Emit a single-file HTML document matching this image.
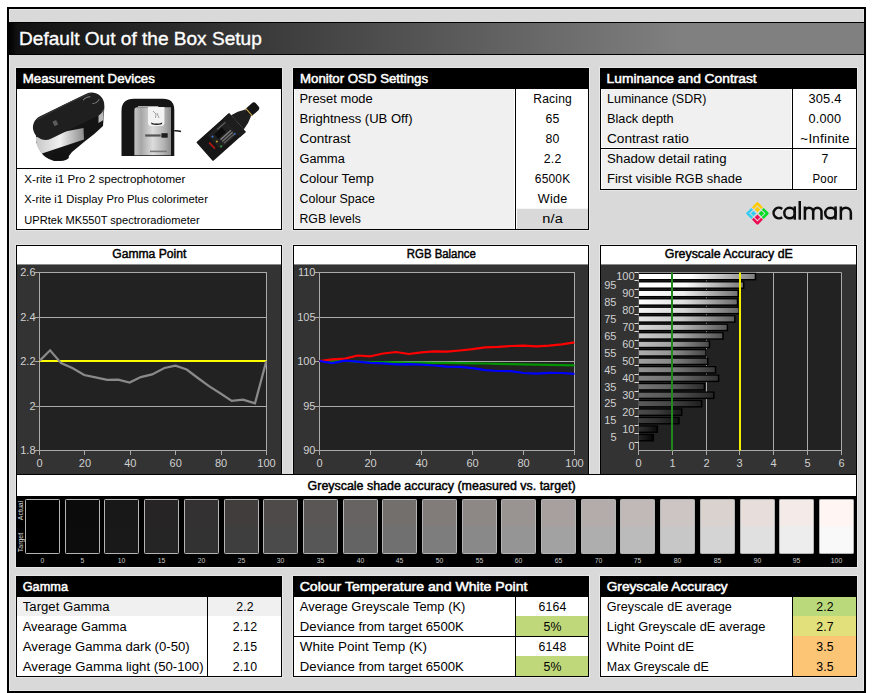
<!DOCTYPE html>
<html><head><meta charset="utf-8"><title>Default Out of the Box Setup</title>
<style>html,body{margin:0;padding:0;background:#fff;width:873px;height:693px;overflow:hidden}
text{font-family:"Liberation Sans", sans-serif}</style></head>
<body><svg width="873" height="693" viewBox="0 0 873 693" style="display:block;font-family:'Liberation Sans', sans-serif"><rect x="0" y="0" width="873" height="693" fill="#fff" />
<rect x="7" y="7" width="859" height="686" fill="#000" />
<rect x="9" y="9" width="855" height="682" fill="#e6e6e6" />
<rect x="10" y="10" width="853" height="680" fill="#d9d9d9" />
<defs><linearGradient id="tg" gradientUnits="userSpaceOnUse" x1="9" x2="680" y1="0" y2="0"><stop offset="0" stop-color="#000"/><stop offset="0.012" stop-color="#111"/><stop offset="1" stop-color="#808080"/></linearGradient></defs>
<rect x="9" y="22" width="855" height="33" fill="#000" />
<rect x="9" y="23" width="855" height="31" fill="url(#tg)" />
<text x="19.0" y="44.7" font-size="19" fill="#fff" text-anchor="start" font-weight="normal" textLength="242.8" lengthAdjust="spacingAndGlyphs" stroke="#fff" stroke-width="0.35">Default Out of the Box Setup</text>
<rect x="15" y="67" width="268" height="164" fill="#e6e6e6" />
<rect x="16" y="68" width="266" height="162" fill="#000" />
<rect x="17" y="69" width="264" height="160" fill="#fff" />
<rect x="16" y="68" width="266" height="21" fill="#000" />
<text x="22.7" y="82.8" font-size="13" fill="#fff" text-anchor="start" font-weight="normal" textLength="132.2" lengthAdjust="spacingAndGlyphs" stroke="#fff" stroke-width="0.5">Measurement Devices</text>
<rect x="16" y="168" width="266" height="1" fill="#000" />
<text x="24.3" y="182.8" font-size="11.3" fill="#000" text-anchor="start" font-weight="normal" textLength="161.1" lengthAdjust="spacingAndGlyphs" >X-rite i1 Pro 2 spectrophotomer</text>
<text x="24.3" y="203.20000000000002" font-size="11.3" fill="#000" text-anchor="start" font-weight="normal" textLength="183.6" lengthAdjust="spacingAndGlyphs" >X-rite i1 Display Pro Plus colorimeter</text>
<text x="24.3" y="223.60000000000002" font-size="11.3" fill="#000" text-anchor="start" font-weight="normal" textLength="175.3" lengthAdjust="spacingAndGlyphs" >UPRtek MK550T spectroradiometer</text>
<rect x="292" y="67" width="298" height="164" fill="#e6e6e6" />
<rect x="293" y="68" width="296" height="162" fill="#000" />
<rect x="294" y="69" width="294" height="160" fill="#fff" />
<rect x="293" y="68" width="296" height="21" fill="#000" />
<text x="300.0" y="82.8" font-size="13" fill="#fff" text-anchor="start" font-weight="normal" textLength="128.0" lengthAdjust="spacingAndGlyphs" stroke="#fff" stroke-width="0.5">Monitor OSD Settings</text>
<rect x="295" y="89" width="219" height="140" fill="#f0f0f0" />
<rect x="515" y="89" width="1" height="140" fill="#000" />
<rect x="516" y="208.5" width="72" height="1.2" fill="#ececec" />
<rect x="517" y="209" width="71" height="20" fill="#d9d9d9" />
<text x="299.5" y="102.8" font-size="12.3" fill="#000" text-anchor="start" font-weight="normal" textLength="73.2" lengthAdjust="spacingAndGlyphs" >Preset mode</text>
<text x="552.6" y="102.8" font-size="12.3" fill="#000" text-anchor="middle" font-weight="normal" textLength="38.7" lengthAdjust="spacingAndGlyphs" letter-spacing="0.2">Racing</text>
<text x="299.5" y="122.88" font-size="12.3" fill="#000" text-anchor="start" font-weight="normal" textLength="113.0" lengthAdjust="spacingAndGlyphs" >Brightness (UB Off)</text>
<text x="552.6" y="122.88" font-size="12.3" fill="#000" text-anchor="middle" font-weight="normal" letter-spacing="0.2">65</text>
<text x="299.5" y="142.95999999999998" font-size="12.3" fill="#000" text-anchor="start" font-weight="normal" textLength="51.1" lengthAdjust="spacingAndGlyphs" >Contrast</text>
<text x="552.6" y="142.95999999999998" font-size="12.3" fill="#000" text-anchor="middle" font-weight="normal" letter-spacing="0.2">80</text>
<text x="299.5" y="163.04" font-size="12.3" fill="#000" text-anchor="start" font-weight="normal" textLength="45.3" lengthAdjust="spacingAndGlyphs" >Gamma</text>
<text x="552.6" y="163.04" font-size="12.3" fill="#000" text-anchor="middle" font-weight="normal" letter-spacing="0.2">2.2</text>
<text x="299.5" y="183.12" font-size="12.3" fill="#000" text-anchor="start" font-weight="normal" textLength="74.2" lengthAdjust="spacingAndGlyphs" >Colour Temp</text>
<text x="552.6" y="183.12" font-size="12.3" fill="#000" text-anchor="middle" font-weight="normal" textLength="35.6" lengthAdjust="spacingAndGlyphs" letter-spacing="0.2">6500K</text>
<text x="299.5" y="203.2" font-size="12.3" fill="#000" text-anchor="start" font-weight="normal" textLength="75.3" lengthAdjust="spacingAndGlyphs" >Colour Space</text>
<text x="552.6" y="203.2" font-size="12.3" fill="#000" text-anchor="middle" font-weight="normal" textLength="29.5" lengthAdjust="spacingAndGlyphs" letter-spacing="0.2">Wide</text>
<text x="299.5" y="223.27999999999997" font-size="12.3" fill="#000" text-anchor="start" font-weight="normal" textLength="61.3" lengthAdjust="spacingAndGlyphs" >RGB levels</text>
<text x="552.6" y="223.27999999999997" font-size="12.3" fill="#000" text-anchor="middle" font-weight="normal" textLength="20.9" lengthAdjust="spacingAndGlyphs" letter-spacing="0.2">n/a</text>
<rect x="599" y="67" width="259" height="124" fill="#e6e6e6" />
<rect x="600" y="68" width="257" height="122" fill="#000" />
<rect x="601" y="69" width="255" height="120" fill="#fff" />
<rect x="600" y="68" width="257" height="21" fill="#000" />
<text x="606.6" y="82.8" font-size="13" fill="#fff" text-anchor="start" font-weight="normal" textLength="150.1" lengthAdjust="spacingAndGlyphs" stroke="#fff" stroke-width="0.5">Luminance and Contrast</text>
<rect x="602" y="89" width="189" height="58" fill="#f0f0f0" />
<rect x="602" y="150" width="189" height="39" fill="#f0f0f0" />
<rect x="792" y="89" width="1" height="100" fill="#000" />
<rect x="600" y="148" width="257" height="1" fill="#000" />
<text x="607.0" y="102.75" font-size="12.3" fill="#000" text-anchor="start" font-weight="normal" textLength="99.4" lengthAdjust="spacingAndGlyphs" >Luminance (SDR)</text>
<text x="825.0" y="102.75" font-size="12.3" fill="#000" text-anchor="middle" font-weight="normal" textLength="33.2" lengthAdjust="spacingAndGlyphs" letter-spacing="0.2">305.4</text>
<text x="607.0" y="122.5" font-size="12.3" fill="#000" text-anchor="start" font-weight="normal" textLength="66.6" lengthAdjust="spacingAndGlyphs" >Black depth</text>
<text x="825.0" y="122.5" font-size="12.3" fill="#000" text-anchor="middle" font-weight="normal" textLength="32.8" lengthAdjust="spacingAndGlyphs" letter-spacing="0.2">0.000</text>
<text x="607.0" y="143.0" font-size="12.3" fill="#000" text-anchor="start" font-weight="normal" textLength="81.8" lengthAdjust="spacingAndGlyphs" >Contrast ratio</text>
<text x="825.0" y="143.0" font-size="12.3" fill="#000" text-anchor="middle" font-weight="normal" textLength="49.3" lengthAdjust="spacingAndGlyphs" letter-spacing="0.2">~Infinite</text>
<text x="607.0" y="162.5" font-size="12.3" fill="#000" text-anchor="start" font-weight="normal" textLength="119.5" lengthAdjust="spacingAndGlyphs" >Shadow detail rating</text>
<text x="825.0" y="162.5" font-size="12.3" fill="#000" text-anchor="middle" font-weight="normal" letter-spacing="0.2">7</text>
<text x="607.0" y="183.0" font-size="12.3" fill="#000" text-anchor="start" font-weight="normal" textLength="135.1" lengthAdjust="spacingAndGlyphs" >First visible RGB shade</text>
<text x="825.0" y="183.0" font-size="12.3" fill="#000" text-anchor="middle" font-weight="normal" textLength="25.0" lengthAdjust="spacingAndGlyphs" letter-spacing="0.2">Poor</text>
<rect x="15" y="244" width="268" height="231" fill="#e6e6e6" />
<rect x="16" y="245" width="266" height="230" fill="#000" />
<rect x="17" y="246" width="264" height="18" fill="#fff" />
<rect x="17" y="264" width="264" height="1" fill="#8a8a8a" />
<rect x="17" y="265" width="264" height="209" fill="#333" />
<text x="149.3" y="258.0" font-size="12" fill="#000" text-anchor="middle" font-weight="normal" textLength="74.0" lengthAdjust="spacingAndGlyphs" stroke="#000" stroke-width="0.45">Gamma Point</text>
<rect x="292" y="244" width="298" height="231" fill="#e6e6e6" />
<rect x="293" y="245" width="296" height="230" fill="#000" />
<rect x="294" y="246" width="294" height="18" fill="#fff" />
<rect x="294" y="264" width="294" height="1" fill="#8a8a8a" />
<rect x="294" y="265" width="294" height="209" fill="#333" />
<text x="441.3" y="258.0" font-size="12" fill="#000" text-anchor="middle" font-weight="normal" textLength="69.0" lengthAdjust="spacingAndGlyphs" stroke="#000" stroke-width="0.45">RGB Balance</text>
<rect x="599" y="244" width="259" height="231" fill="#e6e6e6" />
<rect x="600" y="245" width="257" height="230" fill="#000" />
<rect x="601" y="246" width="255" height="18" fill="#fff" />
<rect x="601" y="264" width="255" height="1" fill="#8a8a8a" />
<rect x="601" y="265" width="255" height="209" fill="#333" />
<text x="728.8" y="258.0" font-size="12" fill="#000" text-anchor="middle" font-weight="normal" textLength="128.0" lengthAdjust="spacingAndGlyphs" stroke="#000" stroke-width="0.45">Greyscale Accuracy dE</text>
<rect x="39.5" y="272.5" width="227.0" height="178.0" fill="#222" />
<line x1="34.5" y1="272.5" x2="266.5" y2="272.5" stroke="#aaa" stroke-width="1"/>
<text x="35.5" y="276.2" font-size="11" fill="#d0d0d0" text-anchor="end" font-weight="normal" >2.6</text>
<line x1="34.5" y1="317.5" x2="266.5" y2="317.5" stroke="#aaa" stroke-width="1"/>
<text x="35.5" y="321.2" font-size="11" fill="#d0d0d0" text-anchor="end" font-weight="normal" >2.4</text>
<line x1="34.5" y1="361.5" x2="266.5" y2="361.5" stroke="#aaa" stroke-width="1"/>
<text x="35.5" y="365.2" font-size="11" fill="#d0d0d0" text-anchor="end" font-weight="normal" >2.2</text>
<line x1="34.5" y1="406.5" x2="266.5" y2="406.5" stroke="#aaa" stroke-width="1"/>
<text x="35.5" y="410.2" font-size="11" fill="#d0d0d0" text-anchor="end" font-weight="normal" >2</text>
<line x1="34.5" y1="450.5" x2="266.5" y2="450.5" stroke="#aaa" stroke-width="1"/>
<text x="35.5" y="454.2" font-size="11" fill="#d0d0d0" text-anchor="end" font-weight="normal" >1.8</text>
<line x1="39.5" y1="272" x2="39.5" y2="455" stroke="#aaa" stroke-width="1"/>
<line x1="266.5" y1="272" x2="266.5" y2="451" stroke="#aaa" stroke-width="1"/>
<line x1="39.5" y1="450" x2="39.5" y2="455" stroke="#aaa" stroke-width="1"/>
<text x="39.5" y="467" font-size="11" fill="#d0d0d0" text-anchor="middle" font-weight="normal" >0</text>
<line x1="84.5" y1="450" x2="84.5" y2="455" stroke="#aaa" stroke-width="1"/>
<text x="84.9" y="467" font-size="11" fill="#d0d0d0" text-anchor="middle" font-weight="normal" >20</text>
<line x1="130.5" y1="450" x2="130.5" y2="455" stroke="#aaa" stroke-width="1"/>
<text x="130.3" y="467" font-size="11" fill="#d0d0d0" text-anchor="middle" font-weight="normal" >40</text>
<line x1="175.5" y1="450" x2="175.5" y2="455" stroke="#aaa" stroke-width="1"/>
<text x="175.7" y="467" font-size="11" fill="#d0d0d0" text-anchor="middle" font-weight="normal" >60</text>
<line x1="221.5" y1="450" x2="221.5" y2="455" stroke="#aaa" stroke-width="1"/>
<text x="221.1" y="467" font-size="11" fill="#d0d0d0" text-anchor="middle" font-weight="normal" >80</text>
<line x1="266.5" y1="450" x2="266.5" y2="455" stroke="#aaa" stroke-width="1"/>
<text x="266.5" y="467" font-size="11" fill="#d0d0d0" text-anchor="middle" font-weight="normal" >100</text>
<line x1="39.5" y1="361" x2="266.5" y2="361" stroke="#ffff00" stroke-width="2.2"/>
<polyline fill="none" stroke="#8a8a8a" stroke-width="2.2" points="39.8,360.6 50.1,350.3 61.1,363.1 72.8,368.2 84.2,375 95.5,377.4 107.2,379.9 118.2,379.6 129.6,382.6 140.8,377.1 152.1,374.4 164.4,368 175.5,365.6 186.7,369.5 197.9,378 209,386.2 220.2,393.3 231.7,400.8 243,399.6 255,403.3 266.3,361.1"/>
<rect x="319.5" y="272.5" width="255.0" height="178.0" fill="#222" />
<line x1="314.5" y1="272.5" x2="574.5" y2="272.5" stroke="#aaa" stroke-width="1"/>
<text x="315.5" y="276.2" font-size="11" fill="#d0d0d0" text-anchor="end" font-weight="normal" >110</text>
<line x1="314.5" y1="317.5" x2="574.5" y2="317.5" stroke="#aaa" stroke-width="1"/>
<text x="315.5" y="321.2" font-size="11" fill="#d0d0d0" text-anchor="end" font-weight="normal" >105</text>
<line x1="314.5" y1="361.5" x2="574.5" y2="361.5" stroke="#aaa" stroke-width="1"/>
<text x="315.5" y="365.2" font-size="11" fill="#d0d0d0" text-anchor="end" font-weight="normal" >100</text>
<line x1="314.5" y1="406.5" x2="574.5" y2="406.5" stroke="#aaa" stroke-width="1"/>
<text x="315.5" y="410.2" font-size="11" fill="#d0d0d0" text-anchor="end" font-weight="normal" >95</text>
<line x1="314.5" y1="450.5" x2="574.5" y2="450.5" stroke="#aaa" stroke-width="1"/>
<text x="315.5" y="454.2" font-size="11" fill="#d0d0d0" text-anchor="end" font-weight="normal" >90</text>
<line x1="319.5" y1="272" x2="319.5" y2="455" stroke="#aaa" stroke-width="1"/>
<line x1="574.5" y1="272" x2="574.5" y2="451" stroke="#aaa" stroke-width="1"/>
<line x1="319.5" y1="450" x2="319.5" y2="455" stroke="#aaa" stroke-width="1"/>
<text x="319.5" y="467" font-size="11" fill="#d0d0d0" text-anchor="middle" font-weight="normal" >0</text>
<line x1="370.5" y1="450" x2="370.5" y2="455" stroke="#aaa" stroke-width="1"/>
<text x="370.5" y="467" font-size="11" fill="#d0d0d0" text-anchor="middle" font-weight="normal" >20</text>
<line x1="421.5" y1="450" x2="421.5" y2="455" stroke="#aaa" stroke-width="1"/>
<text x="421.5" y="467" font-size="11" fill="#d0d0d0" text-anchor="middle" font-weight="normal" >40</text>
<line x1="472.5" y1="450" x2="472.5" y2="455" stroke="#aaa" stroke-width="1"/>
<text x="472.5" y="467" font-size="11" fill="#d0d0d0" text-anchor="middle" font-weight="normal" >60</text>
<line x1="523.5" y1="450" x2="523.5" y2="455" stroke="#aaa" stroke-width="1"/>
<text x="523.5" y="467" font-size="11" fill="#d0d0d0" text-anchor="middle" font-weight="normal" >80</text>
<line x1="574.5" y1="450" x2="574.5" y2="455" stroke="#aaa" stroke-width="1"/>
<text x="574.5" y="467" font-size="11" fill="#d0d0d0" text-anchor="middle" font-weight="normal" >100</text>
<polyline fill="none" stroke="#009400" stroke-width="2.2" stroke-linejoin="round" points="319.5,361 332.25,361 345.0,361 357.75,361.7 370.5,362.0 383.25,362.2 396.0,362.4 408.75,362.5 421.5,362.59999999999997 434.25,362.79999999999995 447.0,362.9 459.75,363.09999999999997 472.5,363.29999999999995 485.25,363.5 498.0,363.79999999999995 510.75,364.09999999999997 523.5,364.29999999999995 536.25,364.59999999999997 549.0,364.9 561.75,365.2 574.5,365.4"/>
<polyline fill="none" stroke="#ff0000" stroke-width="2.2" stroke-linejoin="round" points="319.5,361 332.25,359.4 345.0,358.6 357.75,355.5 370.5,356.3 383.25,353.5 396.0,352 408.75,354 421.5,352.4 434.25,351.3 447.0,351.6 459.75,350.5 472.5,349.2 485.25,347.3 498.0,346.8 510.75,346 523.5,345.7 536.25,346.4 549.0,345.6 561.75,344.4 574.5,342.3"/>
<polyline fill="none" stroke="#0000ff" stroke-width="2.2" stroke-linejoin="round" points="319.5,361 332.25,363.2 345.0,360.6 357.75,361.7 370.5,362.8 383.25,363.4 396.0,364.3 408.75,364.1 421.5,364.6 434.25,365.5 447.0,366.6 459.75,366.9 472.5,368.2 485.25,370.1 498.0,371 510.75,371.2 523.5,373 536.25,373.6 549.0,372.8 561.75,373 574.5,373.8"/>
<rect x="638.5" y="272.5" width="202.98000000000002" height="178.0" fill="#222" />
<line x1="638.5" y1="450" x2="638.5" y2="455" stroke="#aaa" stroke-width="1"/>
<text x="638.5" y="467" font-size="11" fill="#d0d0d0" text-anchor="middle" font-weight="normal" >0</text>
<line x1="672.5" y1="450" x2="672.5" y2="455" stroke="#aaa" stroke-width="1"/>
<text x="672.5" y="467" font-size="11" fill="#d0d0d0" text-anchor="middle" font-weight="normal" >1</text>
<line x1="706.5" y1="272.5" x2="706.5" y2="451" stroke="#aaa" stroke-width="1"/>
<line x1="706.5" y1="450" x2="706.5" y2="455" stroke="#aaa" stroke-width="1"/>
<text x="706.5" y="467" font-size="11" fill="#d0d0d0" text-anchor="middle" font-weight="normal" >2</text>
<line x1="739.5" y1="450" x2="739.5" y2="455" stroke="#aaa" stroke-width="1"/>
<text x="739.5" y="467" font-size="11" fill="#d0d0d0" text-anchor="middle" font-weight="normal" >3</text>
<line x1="773.5" y1="272.5" x2="773.5" y2="451" stroke="#aaa" stroke-width="1"/>
<line x1="773.5" y1="450" x2="773.5" y2="455" stroke="#aaa" stroke-width="1"/>
<text x="773.5" y="467" font-size="11" fill="#d0d0d0" text-anchor="middle" font-weight="normal" >4</text>
<line x1="807.5" y1="272.5" x2="807.5" y2="451" stroke="#aaa" stroke-width="1"/>
<line x1="807.5" y1="450" x2="807.5" y2="455" stroke="#aaa" stroke-width="1"/>
<text x="807.5" y="467" font-size="11" fill="#d0d0d0" text-anchor="middle" font-weight="normal" >5</text>
<line x1="841.5" y1="272.5" x2="841.5" y2="451" stroke="#aaa" stroke-width="1"/>
<line x1="841.5" y1="450" x2="841.5" y2="455" stroke="#aaa" stroke-width="1"/>
<text x="841.5" y="467" font-size="11" fill="#d0d0d0" text-anchor="middle" font-weight="normal" >6</text>
<line x1="638.5" y1="450.5" x2="841.48" y2="450.5" stroke="#aaa" stroke-width="1"/>
<line x1="638.5" y1="272.5" x2="841.48" y2="272.5" stroke="#aaa" stroke-width="1"/>
<line x1="638.5" y1="272" x2="638.5" y2="455" stroke="#aaa" stroke-width="1"/>
<defs>
<linearGradient id="b0" x1="0" x2="1"><stop offset="0" stop-color="rgb(0,0,0)"/><stop offset="0.45" stop-color="rgb(0,0,0)"/><stop offset="1" stop-color="rgb(0,0,0)"/></linearGradient>
<linearGradient id="b5" x1="0" x2="1"><stop offset="0" stop-color="rgb(34,34,34)"/><stop offset="0.45" stop-color="rgb(22,22,22)"/><stop offset="1" stop-color="rgb(6,6,6)"/></linearGradient>
<linearGradient id="b10" x1="0" x2="1"><stop offset="0" stop-color="rgb(48,48,48)"/><stop offset="0.45" stop-color="rgb(35,35,35)"/><stop offset="1" stop-color="rgb(12,12,12)"/></linearGradient>
<linearGradient id="b15" x1="0" x2="1"><stop offset="0" stop-color="rgb(62,62,62)"/><stop offset="0.45" stop-color="rgb(48,48,48)"/><stop offset="1" stop-color="rgb(19,19,19)"/></linearGradient>
<linearGradient id="b20" x1="0" x2="1"><stop offset="0" stop-color="rgb(76,76,76)"/><stop offset="0.45" stop-color="rgb(61,61,61)"/><stop offset="1" stop-color="rgb(25,25,25)"/></linearGradient>
<linearGradient id="b25" x1="0" x2="1"><stop offset="0" stop-color="rgb(90,90,90)"/><stop offset="0.45" stop-color="rgb(73,73,73)"/><stop offset="1" stop-color="rgb(31,31,31)"/></linearGradient>
<linearGradient id="b30" x1="0" x2="1"><stop offset="0" stop-color="rgb(104,104,104)"/><stop offset="0.45" stop-color="rgb(86,86,86)"/><stop offset="1" stop-color="rgb(38,38,38)"/></linearGradient>
<linearGradient id="b35" x1="0" x2="1"><stop offset="0" stop-color="rgb(118,118,118)"/><stop offset="0.45" stop-color="rgb(99,99,99)"/><stop offset="1" stop-color="rgb(44,44,44)"/></linearGradient>
<linearGradient id="b40" x1="0" x2="1"><stop offset="0" stop-color="rgb(132,132,132)"/><stop offset="0.45" stop-color="rgb(112,112,112)"/><stop offset="1" stop-color="rgb(51,51,51)"/></linearGradient>
<linearGradient id="b45" x1="0" x2="1"><stop offset="0" stop-color="rgb(146,146,146)"/><stop offset="0.45" stop-color="rgb(124,124,124)"/><stop offset="1" stop-color="rgb(57,57,57)"/></linearGradient>
<linearGradient id="b50" x1="0" x2="1"><stop offset="0" stop-color="rgb(160,160,160)"/><stop offset="0.45" stop-color="rgb(137,137,137)"/><stop offset="1" stop-color="rgb(63,63,63)"/></linearGradient>
<linearGradient id="b55" x1="0" x2="1"><stop offset="0" stop-color="rgb(174,174,174)"/><stop offset="0.45" stop-color="rgb(150,150,150)"/><stop offset="1" stop-color="rgb(70,70,70)"/></linearGradient>
<linearGradient id="b60" x1="0" x2="1"><stop offset="0" stop-color="rgb(188,188,188)"/><stop offset="0.45" stop-color="rgb(163,163,163)"/><stop offset="1" stop-color="rgb(76,76,76)"/></linearGradient>
<linearGradient id="b65" x1="0" x2="1"><stop offset="0" stop-color="rgb(202,202,202)"/><stop offset="0.45" stop-color="rgb(175,175,175)"/><stop offset="1" stop-color="rgb(82,82,82)"/></linearGradient>
<linearGradient id="b70" x1="0" x2="1"><stop offset="0" stop-color="rgb(216,216,216)"/><stop offset="0.45" stop-color="rgb(188,188,188)"/><stop offset="1" stop-color="rgb(89,89,89)"/></linearGradient>
<linearGradient id="b75" x1="0" x2="1"><stop offset="0" stop-color="rgb(230,230,230)"/><stop offset="0.45" stop-color="rgb(201,201,201)"/><stop offset="1" stop-color="rgb(95,95,95)"/></linearGradient>
<linearGradient id="b80" x1="0" x2="1"><stop offset="0" stop-color="rgb(244,244,244)"/><stop offset="0.45" stop-color="rgb(214,214,214)"/><stop offset="1" stop-color="rgb(102,102,102)"/></linearGradient>
<linearGradient id="b85" x1="0" x2="1"><stop offset="0" stop-color="rgb(255,255,255)"/><stop offset="0.45" stop-color="rgb(226,226,226)"/><stop offset="1" stop-color="rgb(108,108,108)"/></linearGradient>
<linearGradient id="b90" x1="0" x2="1"><stop offset="0" stop-color="rgb(255,255,255)"/><stop offset="0.45" stop-color="rgb(239,239,239)"/><stop offset="1" stop-color="rgb(114,114,114)"/></linearGradient>
<linearGradient id="b95" x1="0" x2="1"><stop offset="0" stop-color="rgb(255,255,255)"/><stop offset="0.45" stop-color="rgb(252,252,252)"/><stop offset="1" stop-color="rgb(121,121,121)"/></linearGradient>
<linearGradient id="b100" x1="0" x2="1"><stop offset="0" stop-color="rgb(255,255,255)"/><stop offset="0.45" stop-color="rgb(255,255,255)"/><stop offset="1" stop-color="rgb(127,127,127)"/></linearGradient>
</defs>
<rect x="638.5" y="272.8" width="117.71" height="7.6" fill="#000" />
<rect x="639.0" y="274.0" width="115.71" height="5.0" fill="url(#b100)" />
<line x1="634.5" y1="272.5" x2="638.5" y2="272.5" stroke="#ddd" stroke-width="1"/>
<text x="634.5" y="280.33809523809526" font-size="11" fill="#d0d0d0" text-anchor="end" font-weight="normal" >100</text>
<rect x="638.5" y="281.28" width="105.87" height="7.6" fill="#000" />
<rect x="639.0" y="282.48" width="103.87" height="5.0" fill="url(#b95)" />
<line x1="634.5" y1="280.5" x2="638.5" y2="280.5" stroke="#ddd" stroke-width="1"/>
<text x="616.5" y="288.81428571428575" font-size="11" fill="#d0d0d0" text-anchor="end" font-weight="normal" >95</text>
<rect x="638.5" y="289.75" width="100.46" height="7.6" fill="#000" />
<rect x="639.0" y="290.95" width="98.46" height="5.0" fill="url(#b90)" />
<line x1="634.5" y1="289.5" x2="638.5" y2="289.5" stroke="#ddd" stroke-width="1"/>
<text x="634.5" y="297.2904761904762" font-size="11" fill="#d0d0d0" text-anchor="end" font-weight="normal" >90</text>
<rect x="638.5" y="298.23" width="99.78" height="7.6" fill="#000" />
<rect x="639.0" y="299.43" width="97.78" height="5.0" fill="url(#b85)" />
<line x1="634.5" y1="297.5" x2="638.5" y2="297.5" stroke="#ddd" stroke-width="1"/>
<text x="616.5" y="305.7666666666667" font-size="11" fill="#d0d0d0" text-anchor="end" font-weight="normal" >85</text>
<rect x="638.5" y="306.7" width="101.48" height="7.6" fill="#000" />
<rect x="639.0" y="307.9" width="99.48" height="5.0" fill="url(#b80)" />
<line x1="634.5" y1="306.5" x2="638.5" y2="306.5" stroke="#ddd" stroke-width="1"/>
<text x="634.5" y="314.2428571428572" font-size="11" fill="#d0d0d0" text-anchor="end" font-weight="normal" >80</text>
<rect x="638.5" y="315.18" width="97.08" height="7.6" fill="#000" />
<rect x="639.0" y="316.38" width="95.08" height="5.0" fill="url(#b75)" />
<line x1="634.5" y1="314.5" x2="638.5" y2="314.5" stroke="#ddd" stroke-width="1"/>
<text x="616.5" y="322.71904761904767" font-size="11" fill="#d0d0d0" text-anchor="end" font-weight="normal" >75</text>
<rect x="638.5" y="323.66" width="89.63" height="7.6" fill="#000" />
<rect x="639.0" y="324.86" width="87.63" height="5.0" fill="url(#b70)" />
<line x1="634.5" y1="323.5" x2="638.5" y2="323.5" stroke="#ddd" stroke-width="1"/>
<text x="634.5" y="331.19523809523815" font-size="11" fill="#d0d0d0" text-anchor="end" font-weight="normal" >70</text>
<rect x="638.5" y="332.13" width="85.24" height="7.6" fill="#000" />
<rect x="639.0" y="333.33" width="83.24" height="5.0" fill="url(#b65)" />
<line x1="634.5" y1="331.5" x2="638.5" y2="331.5" stroke="#ddd" stroke-width="1"/>
<text x="616.5" y="339.6714285714286" font-size="11" fill="#d0d0d0" text-anchor="end" font-weight="normal" >65</text>
<rect x="638.5" y="340.61" width="71.7" height="7.6" fill="#000" />
<rect x="639.0" y="341.81" width="69.7" height="5.0" fill="url(#b60)" />
<line x1="634.5" y1="340.5" x2="638.5" y2="340.5" stroke="#ddd" stroke-width="1"/>
<text x="634.5" y="348.14761904761906" font-size="11" fill="#d0d0d0" text-anchor="end" font-weight="normal" >60</text>
<rect x="638.5" y="349.09" width="68.32" height="7.6" fill="#000" />
<rect x="639.0" y="350.29" width="66.32" height="5.0" fill="url(#b55)" />
<line x1="634.5" y1="348.5" x2="638.5" y2="348.5" stroke="#ddd" stroke-width="1"/>
<text x="616.5" y="356.62380952380954" font-size="11" fill="#d0d0d0" text-anchor="end" font-weight="normal" >55</text>
<rect x="638.5" y="357.56" width="70.01" height="7.6" fill="#000" />
<rect x="639.0" y="358.76" width="68.01" height="5.0" fill="url(#b50)" />
<line x1="634.5" y1="357.5" x2="638.5" y2="357.5" stroke="#ddd" stroke-width="1"/>
<text x="634.5" y="365.1" font-size="11" fill="#d0d0d0" text-anchor="end" font-weight="normal" >50</text>
<rect x="638.5" y="366.04" width="77.79" height="7.6" fill="#000" />
<rect x="639.0" y="367.24" width="75.79" height="5.0" fill="url(#b45)" />
<line x1="634.5" y1="365.5" x2="638.5" y2="365.5" stroke="#ddd" stroke-width="1"/>
<text x="616.5" y="373.5761904761905" font-size="11" fill="#d0d0d0" text-anchor="end" font-weight="normal" >45</text>
<rect x="638.5" y="374.51" width="80.84" height="7.6" fill="#000" />
<rect x="639.0" y="375.71" width="78.84" height="5.0" fill="url(#b40)" />
<line x1="634.5" y1="374.5" x2="638.5" y2="374.5" stroke="#ddd" stroke-width="1"/>
<text x="634.5" y="382.052380952381" font-size="11" fill="#d0d0d0" text-anchor="end" font-weight="normal" >40</text>
<rect x="638.5" y="382.99" width="66.63" height="7.6" fill="#000" />
<rect x="639.0" y="384.19" width="64.63" height="5.0" fill="url(#b35)" />
<line x1="634.5" y1="382.5" x2="638.5" y2="382.5" stroke="#ddd" stroke-width="1"/>
<text x="616.5" y="390.52857142857147" font-size="11" fill="#d0d0d0" text-anchor="end" font-weight="normal" >35</text>
<rect x="638.5" y="391.47" width="76.1" height="7.6" fill="#000" />
<rect x="639.0" y="392.67" width="74.1" height="5.0" fill="url(#b30)" />
<line x1="634.5" y1="391.5" x2="638.5" y2="391.5" stroke="#ddd" stroke-width="1"/>
<text x="634.5" y="399.00476190476195" font-size="11" fill="#d0d0d0" text-anchor="end" font-weight="normal" >30</text>
<rect x="638.5" y="399.94" width="63.92" height="7.6" fill="#000" />
<rect x="639.0" y="401.14" width="61.92" height="5.0" fill="url(#b25)" />
<line x1="634.5" y1="399.5" x2="638.5" y2="399.5" stroke="#ddd" stroke-width="1"/>
<text x="616.5" y="407.4809523809524" font-size="11" fill="#d0d0d0" text-anchor="end" font-weight="normal" >25</text>
<rect x="638.5" y="408.42" width="43.96" height="7.6" fill="#000" />
<rect x="639.0" y="409.62" width="41.96" height="5.0" fill="url(#b20)" />
<line x1="634.5" y1="408.5" x2="638.5" y2="408.5" stroke="#ddd" stroke-width="1"/>
<text x="634.5" y="415.95714285714286" font-size="11" fill="#d0d0d0" text-anchor="end" font-weight="normal" >20</text>
<rect x="638.5" y="416.9" width="41.26" height="7.6" fill="#000" />
<rect x="639.0" y="418.1" width="39.26" height="5.0" fill="url(#b15)" />
<line x1="634.5" y1="416.5" x2="638.5" y2="416.5" stroke="#ddd" stroke-width="1"/>
<text x="616.5" y="424.43333333333334" font-size="11" fill="#d0d0d0" text-anchor="end" font-weight="normal" >15</text>
<rect x="638.5" y="425.37" width="19.61" height="7.6" fill="#000" />
<rect x="639.0" y="426.57" width="17.61" height="5.0" fill="url(#b10)" />
<line x1="634.5" y1="425.5" x2="638.5" y2="425.5" stroke="#ddd" stroke-width="1"/>
<text x="634.5" y="432.9095238095238" font-size="11" fill="#d0d0d0" text-anchor="end" font-weight="normal" >10</text>
<rect x="638.5" y="433.85" width="15.55" height="7.6" fill="#000" />
<rect x="639.0" y="435.05" width="13.55" height="5.0" fill="url(#b5)" />
<line x1="634.5" y1="433.5" x2="638.5" y2="433.5" stroke="#ddd" stroke-width="1"/>
<text x="616.5" y="441.3857142857143" font-size="11" fill="#d0d0d0" text-anchor="end" font-weight="normal" >5</text>
<line x1="634.5" y1="442.5" x2="638.5" y2="442.5" stroke="#ddd" stroke-width="1"/>
<text x="634.5" y="449.8619047619048" font-size="11" fill="#d0d0d0" text-anchor="end" font-weight="normal" >0</text>
<line x1="672" y1="272.5" x2="672" y2="450.5" stroke="#1e8a1e" stroke-width="2"/>
<line x1="740" y1="272.5" x2="740" y2="450.5" stroke="#f0f000" stroke-width="2"/>
<rect x="15" y="474" width="843" height="94" fill="#e6e6e6" />
<rect x="16" y="474" width="841" height="93" fill="#000" />
<rect x="17" y="475" width="839" height="21" fill="#fff" />
<text x="441.6" y="489.7" font-size="12" fill="#000" text-anchor="middle" font-weight="normal" textLength="268.0" lengthAdjust="spacingAndGlyphs" stroke="#000" stroke-width="0.45">Greyscale shade accuracy (measured vs. target)</text>
<text x="0" y="0" font-size="1" fill="#000" text-anchor="start" font-weight="normal" ></text>
<g transform="translate(23,510.5) rotate(-90)">
<text x="0" y="0" font-size="7.5" fill="#ddd" text-anchor="middle" font-weight="normal" textLength="19.3" lengthAdjust="spacingAndGlyphs" >Actual</text>
</g>
<g transform="translate(23,542.5) rotate(-90)">
<text x="0" y="0" font-size="7.5" fill="#ddd" text-anchor="middle" font-weight="normal" textLength="19.3" lengthAdjust="spacingAndGlyphs" >Target</text>
</g>
<rect x="25.50" y="499.5" width="34" height="54" rx="0.8" fill="rgb(0,0,0)" stroke="#b4b4b4" stroke-width="1"/>
<rect x="26.00" y="500" width="33" height="26.5" fill="rgb(0, 0, 0)"/>
<text x="42.5" y="563" font-size="6.8" fill="#c8c8c8" text-anchor="middle" font-weight="normal" >0</text>
<rect x="65.50" y="499.5" width="34" height="54" rx="0.8" fill="rgb(12,12,12)" stroke="#b4b4b4" stroke-width="1"/>
<rect x="66.00" y="500" width="33" height="26.5" fill="rgb(12, 11, 11)"/>
<text x="82.5" y="563" font-size="6.8" fill="#c8c8c8" text-anchor="middle" font-weight="normal" >5</text>
<rect x="104.50" y="499.5" width="34" height="54" rx="0.8" fill="rgb(25,25,25)" stroke="#b4b4b4" stroke-width="1"/>
<rect x="105.00" y="500" width="33" height="26.5" fill="rgb(25, 24, 24)"/>
<text x="121.5" y="563" font-size="6.8" fill="#c8c8c8" text-anchor="middle" font-weight="normal" >10</text>
<rect x="144.50" y="499.5" width="34" height="54" rx="0.8" fill="rgb(37,37,37)" stroke="#b4b4b4" stroke-width="1"/>
<rect x="145.00" y="500" width="33" height="26.5" fill="rgb(38, 36, 36)"/>
<text x="161.5" y="563" font-size="6.8" fill="#c8c8c8" text-anchor="middle" font-weight="normal" >15</text>
<rect x="184.50" y="499.5" width="34" height="54" rx="0.8" fill="rgb(50,50,50)" stroke="#b4b4b4" stroke-width="1"/>
<rect x="185.00" y="500" width="33" height="26.5" fill="rgb(51, 49, 49)"/>
<text x="201.5" y="563" font-size="6.8" fill="#c8c8c8" text-anchor="middle" font-weight="normal" >20</text>
<rect x="224.50" y="499.5" width="34" height="54" rx="0.8" fill="rgb(62,62,62)" stroke="#b4b4b4" stroke-width="1"/>
<rect x="225.00" y="500" width="33" height="26.5" fill="rgb(64, 61, 60)"/>
<text x="241.5" y="563" font-size="6.8" fill="#c8c8c8" text-anchor="middle" font-weight="normal" >25</text>
<rect x="263.50" y="499.5" width="34" height="54" rx="0.8" fill="rgb(75,75,75)" stroke="#b4b4b4" stroke-width="1"/>
<rect x="264.00" y="500" width="33" height="26.5" fill="rgb(77, 74, 73)"/>
<text x="280.5" y="563" font-size="6.8" fill="#c8c8c8" text-anchor="middle" font-weight="normal" >30</text>
<rect x="303.50" y="499.5" width="34" height="54" rx="0.8" fill="rgb(87,87,87)" stroke="#b4b4b4" stroke-width="1"/>
<rect x="304.00" y="500" width="33" height="26.5" fill="rgb(89, 86, 85)"/>
<text x="320.5" y="563" font-size="6.8" fill="#c8c8c8" text-anchor="middle" font-weight="normal" >35</text>
<rect x="343.50" y="499.5" width="34" height="54" rx="0.8" fill="rgb(100,100,100)" stroke="#b4b4b4" stroke-width="1"/>
<rect x="344.00" y="500" width="33" height="26.5" fill="rgb(103, 99, 98)"/>
<text x="360.5" y="563" font-size="6.8" fill="#c8c8c8" text-anchor="middle" font-weight="normal" >40</text>
<rect x="382.50" y="499.5" width="34" height="54" rx="0.8" fill="rgb(112,112,112)" stroke="#b4b4b4" stroke-width="1"/>
<rect x="383.00" y="500" width="33" height="26.5" fill="rgb(115, 111, 109)"/>
<text x="399.5" y="563" font-size="6.8" fill="#c8c8c8" text-anchor="middle" font-weight="normal" >45</text>
<rect x="422.50" y="499.5" width="34" height="54" rx="0.8" fill="rgb(125,125,125)" stroke="#b4b4b4" stroke-width="1"/>
<rect x="423.00" y="500" width="33" height="26.5" fill="rgb(129, 124, 122)"/>
<text x="439.5" y="563" font-size="6.8" fill="#c8c8c8" text-anchor="middle" font-weight="normal" >50</text>
<rect x="462.50" y="499.5" width="34" height="54" rx="0.8" fill="rgb(137,137,137)" stroke="#b4b4b4" stroke-width="1"/>
<rect x="463.00" y="500" width="33" height="26.5" fill="rgb(141, 135, 134)"/>
<text x="479.5" y="563" font-size="6.8" fill="#c8c8c8" text-anchor="middle" font-weight="normal" >55</text>
<rect x="501.50" y="499.5" width="34" height="54" rx="0.8" fill="rgb(149,149,149)" stroke="#b4b4b4" stroke-width="1"/>
<rect x="502.00" y="500" width="33" height="26.5" fill="rgb(153, 147, 146)"/>
<text x="518.5" y="563" font-size="6.8" fill="#c8c8c8" text-anchor="middle" font-weight="normal" >60</text>
<rect x="541.50" y="499.5" width="34" height="54" rx="0.8" fill="rgb(162,162,162)" stroke="#b4b4b4" stroke-width="1"/>
<rect x="542.00" y="500" width="33" height="26.5" fill="rgb(167, 160, 158)"/>
<text x="558.5" y="563" font-size="6.8" fill="#c8c8c8" text-anchor="middle" font-weight="normal" >65</text>
<rect x="581.50" y="499.5" width="34" height="54" rx="0.8" fill="rgb(174,174,174)" stroke="#b4b4b4" stroke-width="1"/>
<rect x="582.00" y="500" width="33" height="26.5" fill="rgb(179, 172, 170)"/>
<text x="598.5" y="563" font-size="6.8" fill="#c8c8c8" text-anchor="middle" font-weight="normal" >70</text>
<rect x="620.50" y="499.5" width="34" height="54" rx="0.8" fill="rgb(187,187,187)" stroke="#b4b4b4" stroke-width="1"/>
<rect x="621.00" y="500" width="33" height="26.5" fill="rgb(193, 185, 183)"/>
<text x="637.5" y="563" font-size="6.8" fill="#c8c8c8" text-anchor="middle" font-weight="normal" >75</text>
<rect x="660.50" y="499.5" width="34" height="54" rx="0.8" fill="rgb(199,199,199)" stroke="#b4b4b4" stroke-width="1"/>
<rect x="661.00" y="500" width="33" height="26.5" fill="rgb(205, 197, 195)"/>
<text x="677.5" y="563" font-size="6.8" fill="#c8c8c8" text-anchor="middle" font-weight="normal" >80</text>
<rect x="700.50" y="499.5" width="34" height="54" rx="0.8" fill="rgb(212,212,212)" stroke="#b4b4b4" stroke-width="1"/>
<rect x="701.00" y="500" width="33" height="26.5" fill="rgb(218, 210, 207)"/>
<text x="717.5" y="563" font-size="6.8" fill="#c8c8c8" text-anchor="middle" font-weight="normal" >85</text>
<rect x="740.50" y="499.5" width="34" height="54" rx="0.8" fill="rgb(224,224,224)" stroke="#b4b4b4" stroke-width="1"/>
<rect x="741.00" y="500" width="33" height="26.5" fill="rgb(231, 222, 219)"/>
<text x="757.5" y="563" font-size="6.8" fill="#c8c8c8" text-anchor="middle" font-weight="normal" >90</text>
<rect x="779.50" y="499.5" width="34" height="54" rx="0.8" fill="rgb(237,237,237)" stroke="#b4b4b4" stroke-width="1"/>
<rect x="780.00" y="500" width="33" height="26.5" fill="rgb(244, 235, 232)"/>
<text x="796.5" y="563" font-size="6.8" fill="#c8c8c8" text-anchor="middle" font-weight="normal" >95</text>
<rect x="819.50" y="499.5" width="34" height="54" rx="0.8" fill="rgb(249,249,249)" stroke="#b4b4b4" stroke-width="1"/>
<rect x="820.00" y="500" width="33" height="26.5" fill="rgb(255, 246, 243)"/>
<text x="836.5" y="563" font-size="6.8" fill="#c8c8c8" text-anchor="middle" font-weight="normal" >100</text>
<rect x="15" y="575" width="268" height="103" fill="#e6e6e6" />
<rect x="16" y="576" width="266" height="101" fill="#000" />
<rect x="17" y="597" width="264" height="79" fill="#fff" />
<text x="22.7" y="590.6" font-size="13" fill="#fff" text-anchor="start" font-weight="normal" textLength="45.3" lengthAdjust="spacingAndGlyphs" stroke="#fff" stroke-width="0.5">Gamma</text>
<rect x="207" y="597" width="1" height="79" fill="#000" />
<rect x="17" y="597" width="190" height="19" fill="#f0f0f0" />
<rect x="208" y="597" width="73" height="19" fill="#f0f0f0" />
<text x="22.8" y="610.9" font-size="12.3" fill="#000" text-anchor="start" font-weight="normal" textLength="86.8" lengthAdjust="spacingAndGlyphs" >Target Gamma</text>
<text x="245.0" y="610.9" font-size="12.3" fill="#000" text-anchor="middle" font-weight="normal" letter-spacing="0.2">2.2</text>
<text x="22.8" y="630.8" font-size="12.3" fill="#000" text-anchor="start" font-weight="normal" textLength="103.8" lengthAdjust="spacingAndGlyphs" >Avearage Gamma</text>
<text x="245.0" y="630.8" font-size="12.3" fill="#000" text-anchor="middle" font-weight="normal" letter-spacing="0.2">2.12</text>
<text x="22.8" y="650.6999999999999" font-size="12.3" fill="#000" text-anchor="start" font-weight="normal" textLength="166.8" lengthAdjust="spacingAndGlyphs" >Average Gamma dark (0-50)</text>
<text x="245.0" y="650.6999999999999" font-size="12.3" fill="#000" text-anchor="middle" font-weight="normal" letter-spacing="0.2">2.15</text>
<text x="22.8" y="670.6" font-size="12.3" fill="#000" text-anchor="start" font-weight="normal" textLength="180.8" lengthAdjust="spacingAndGlyphs" >Average Gamma light (50-100)</text>
<text x="245.0" y="670.6" font-size="12.3" fill="#000" text-anchor="middle" font-weight="normal" letter-spacing="0.2">2.10</text>
<rect x="292" y="575" width="298" height="103" fill="#e6e6e6" />
<rect x="293" y="576" width="296" height="101" fill="#000" />
<rect x="294" y="597" width="294" height="79" fill="#fff" />
<text x="299.7" y="590.6" font-size="13" fill="#fff" text-anchor="start" font-weight="normal" textLength="227.8" lengthAdjust="spacingAndGlyphs" stroke="#fff" stroke-width="0.5">Colour Temperature and White Point</text>
<rect x="515" y="597" width="1" height="79" fill="#000" />
<text x="299.8" y="610.9" font-size="12.3" fill="#000" text-anchor="start" font-weight="normal" textLength="165.6" lengthAdjust="spacingAndGlyphs" >Average Greyscale Temp (K)</text>
<text x="552.5" y="610.9" font-size="12.3" fill="#000" text-anchor="middle" font-weight="normal" letter-spacing="0.2">6164</text>
<rect x="516" y="616" width="72" height="20" fill="#bfd97a" />
<text x="299.8" y="630.8" font-size="12.3" fill="#000" text-anchor="start" font-weight="normal" textLength="164.1" lengthAdjust="spacingAndGlyphs" >Deviance from target 6500K</text>
<text x="552.5" y="630.8" font-size="12.3" fill="#000" text-anchor="middle" font-weight="normal" letter-spacing="0.2">5%</text>
<text x="299.8" y="650.6999999999999" font-size="12.3" fill="#000" text-anchor="start" font-weight="normal" textLength="127.1" lengthAdjust="spacingAndGlyphs" >White Point Temp (K)</text>
<text x="552.5" y="650.6999999999999" font-size="12.3" fill="#000" text-anchor="middle" font-weight="normal" letter-spacing="0.2">6148</text>
<rect x="516" y="656" width="72" height="20" fill="#bfd97a" />
<text x="299.8" y="670.6" font-size="12.3" fill="#000" text-anchor="start" font-weight="normal" textLength="164.1" lengthAdjust="spacingAndGlyphs" >Deviance from target 6500K</text>
<text x="552.5" y="670.6" font-size="12.3" fill="#000" text-anchor="middle" font-weight="normal" letter-spacing="0.2">5%</text>
<rect x="293" y="636" width="296" height="1" fill="#000" />
<rect x="599" y="575" width="259" height="103" fill="#e6e6e6" />
<rect x="600" y="576" width="257" height="101" fill="#000" />
<rect x="601" y="597" width="255" height="79" fill="#fff" />
<text x="606.7" y="590.6" font-size="13" fill="#fff" text-anchor="start" font-weight="normal" textLength="121.0" lengthAdjust="spacingAndGlyphs" stroke="#fff" stroke-width="0.5">Greyscale Accuracy</text>
<rect x="792" y="597" width="1" height="79" fill="#000" />
<rect x="793" y="597" width="63" height="19" fill="#b9d97a" />
<text x="606.8" y="610.9" font-size="12.3" fill="#000" text-anchor="start" font-weight="normal" textLength="124.9" lengthAdjust="spacingAndGlyphs" >Greyscale dE average</text>
<text x="825.0" y="610.9" font-size="12.3" fill="#000" text-anchor="middle" font-weight="normal" letter-spacing="0.2">2.2</text>
<rect x="793" y="616" width="63" height="20" fill="#e2e07a" />
<text x="606.8" y="630.8" font-size="12.3" fill="#000" text-anchor="start" font-weight="normal" textLength="158.6" lengthAdjust="spacingAndGlyphs" >Light Greyscale dE average</text>
<text x="825.0" y="630.8" font-size="12.3" fill="#000" text-anchor="middle" font-weight="normal" letter-spacing="0.2">2.7</text>
<rect x="793" y="636" width="63" height="20" fill="#fcc576" />
<text x="606.8" y="650.6999999999999" font-size="12.3" fill="#000" text-anchor="start" font-weight="normal" textLength="87.2" lengthAdjust="spacingAndGlyphs" >White Point dE</text>
<text x="825.0" y="650.6999999999999" font-size="12.3" fill="#000" text-anchor="middle" font-weight="normal" letter-spacing="0.2">3.5</text>
<rect x="793" y="656" width="63" height="20" fill="#fcc576" />
<text x="606.8" y="670.6" font-size="12.3" fill="#000" text-anchor="start" font-weight="normal" textLength="102.0" lengthAdjust="spacingAndGlyphs" >Max Greyscale dE</text>
<text x="825.0" y="670.6" font-size="12.3" fill="#000" text-anchor="middle" font-weight="normal" letter-spacing="0.2">3.5</text>
<g transform="translate(757.45,213.4)">
<g transform="rotate(0)"><path d="M-4.6,-5.3 L0,-9.9 L4.6,-5.3" fill="none" stroke="#ffcc00" stroke-width="2.6" stroke-linejoin="round"/><path d="M0,-6.7 L2.75,-3.95 L0,-1.2 L-2.75,-3.95 Z" fill="#ffcc00"/></g>
<g transform="rotate(90)"><path d="M-4.6,-5.3 L0,-9.9 L4.6,-5.3" fill="none" stroke="#00dd22" stroke-width="2.6" stroke-linejoin="round"/><path d="M0,-6.7 L2.75,-3.95 L0,-1.2 L-2.75,-3.95 Z" fill="#00dd22"/></g>
<g transform="rotate(180)"><path d="M-4.6,-5.3 L0,-9.9 L4.6,-5.3" fill="none" stroke="#ee0a55" stroke-width="2.6" stroke-linejoin="round"/><path d="M0,-6.7 L2.75,-3.95 L0,-1.2 L-2.75,-3.95 Z" fill="#ee0a55"/></g>
<g transform="rotate(270)"><path d="M-4.6,-5.3 L0,-9.9 L4.6,-5.3" fill="none" stroke="#33ccf5" stroke-width="2.6" stroke-linejoin="round"/><path d="M0,-6.7 L2.75,-3.95 L0,-1.2 L-2.75,-3.95 Z" fill="#33ccf5"/></g>
</g>
<path fill="none" stroke="#0d0d0d" stroke-width="2.5" d="M782.2,208.9 A5.3,5.3 0 1 0 782.2,217.2"/>
<circle fill="none" stroke="#0d0d0d" stroke-width="2.5" cx="789.6" cy="213.05" r="5.3"/>
<path fill="none" stroke="#0d0d0d" stroke-width="2.5" d="M794.75,206.4 V219.7"/>
<path fill="none" stroke="#0d0d0d" stroke-width="2.5" d="M799.75,201 V219.7"/>
<path fill="none" stroke="#0d0d0d" stroke-width="2.5" d="M804.9,219.7 V206.4 M804.9,211.8 A4.15,4.15 0 0 1 813.2,211.8 V219.7 M813.2,211.8 A4.15,4.15 0 0 1 821.5,211.8 V219.7"/>
<circle fill="none" stroke="#0d0d0d" stroke-width="2.5" cx="830.5" cy="213.05" r="5.3"/>
<path fill="none" stroke="#0d0d0d" stroke-width="2.5" d="M835.55,206.4 V219.7"/>
<path fill="none" stroke="#0d0d0d" stroke-width="2.5" d="M840.85,219.7 V206.4 M840.85,212.65 A5.0,5.0 0 0 1 850.85,212.65 V219.7"/>

<defs>
 <linearGradient id="silv" x1="0" x2="1"><stop offset="0" stop-color="#c4c4c4"/><stop offset="0.18" stop-color="#a6a6a6"/><stop offset="0.5" stop-color="#dcdcdc"/><stop offset="0.8" stop-color="#b4b4b4"/><stop offset="1" stop-color="#8c8c8c"/></linearGradient>
 <linearGradient id="silv2" x1="0" x2="1"><stop offset="0" stop-color="#c8c8c8"/><stop offset="0.5" stop-color="#f0f0f0"/><stop offset="1" stop-color="#8c8c8c"/></linearGradient>
 <linearGradient id="scr" x1="0" x2="1"><stop offset="0" stop-color="#222"/><stop offset="1" stop-color="#888"/></linearGradient>
</defs>
<path d="M36,132 L98,101 Q106,100 104,112 L103,126 Q95,134 84,142 L72,152 Q66,162 54,161 Q44,158 41,152 L36,142 Z" fill="#141414"/>
<path d="M36,137 L83.5,128 L84,139.5 L42,153.5 Q37,149 36,141 Z" fill="url(#silv2)"/>
<path d="M98.5,112 L103.5,109 L103.5,120 L98.5,123 Z" fill="#b8b8b8"/>
<g transform="translate(68.6,116.2) rotate(-25.8)">
 <rect x="-38.2" y="-12.5" width="76.4" height="25" rx="12.5" fill="#1f1f1f"/>
 <path d="M-30,-10.5 Q0,-13 30,-11" stroke="#383838" stroke-width="1" fill="none"/>
 <rect x="-17" y="-2" width="4" height="5" fill="#999" opacity="0.5"/>
 <path d="M20,-8 q4,-2 8,0" stroke="#8a8a8a" stroke-width="0.9" fill="none"/>
 <path d="M27,-1 q4,2 8,-1" stroke="#8a8a8a" stroke-width="0.9" fill="none"/>
</g>
<ellipse cx="60" cy="157" rx="9" ry="4" fill="#121212"/>
<path d="M121.5,156 V111 Q121.5,98.8 134,98.8 H163 Q174.3,98.8 174.3,110 V156 Z" fill="#151515"/>
<path d="M134.4,155.2 V110 Q134.4,107.2 137.4,107.2 H171 V155.2 Z" fill="url(#silv)"/>
<path d="M138,106.6 H158.3" stroke="#cfcfcf" stroke-width="0.9"/>
<path d="M148,107 H164.4 V122.5 Q164.4,126 161,126 H151.4 Q148,126 148,122.5 Z" fill="#f2f2f2"/>
<path d="M151,122.4 Q156.6,124.8 162.3,122.4 L161.8,124.3 Q156.6,125.6 151.5,124.3 Z" fill="#1c1c1c"/>
<path d="M153,111 L156,114 L155.5,118 M157,113 L159,118" stroke="#8a8a8a" stroke-width="0.8" fill="none"/>
<rect x="145.2" y="134.4" width="15.5" height="2.2" fill="#555"/>
<rect x="161.4" y="133.2" width="6.3" height="4.5" fill="#1e1e1e"/>
<rect x="150" y="150.6" width="17" height="1.6" fill="#7a7a7a"/>
<path d="M174.3,130.8 Q178,130.6 181,131.4" stroke="#1a1a1a" stroke-width="1.6" fill="none"/>
<g transform="translate(221,137.1) rotate(-41.7)">
 <rect x="-22" y="-12.6" width="44" height="25.3" rx="1" fill="#161616"/>
 <rect x="14" y="-12.6" width="8" height="25.3" fill="#1d1d1d"/>
 <path d="M22,-9.5 Q30,-8 35,-5 L36,-4.8 L36,4.8 L35,5 Q30,8 22,9.5 Z" fill="#1e1e1e"/>
 <rect x="35.5" y="-4.8" width="13" height="9.6" rx="3" fill="#151515"/>
 <rect x="37" y="-4.9" width="1.1" height="9.8" fill="#c8a84a"/>
 <rect x="-8" y="-9.5" width="21.5" height="17.5" fill="#202020" stroke="#2e2e2e" stroke-width="0.6"/>
 <rect x="-3" y="-6.5" width="10" height="6" fill="#0c0c0c"/>
 <rect x="-2" y="0.8" width="14" height="1.5" fill="#7c7c7c"/>
 <rect x="-2" y="3.3" width="14" height="1.5" fill="#707070"/>
 <rect x="-2" y="5.8" width="14" height="1.3" fill="#606060"/>
 <rect x="2" y="-8.6" width="11" height="1" fill="#6a6a6a"/>
 <path d="M-12.5,-3.7 L-12.1,4.5" stroke="#b01818" stroke-width="1.8" fill="none"/>
 <circle cx="-6" cy="-6" r="1" fill="#3a78d8"/>
 <circle cx="-6" cy="0.5" r="1" fill="#c8a030"/>
 <circle cx="-6" cy="7" r="1" fill="#30a040"/>
 <circle cx="12.5" cy="6.8" r="0.9" fill="#3a78d8"/>
</g>
</svg></body></html>
